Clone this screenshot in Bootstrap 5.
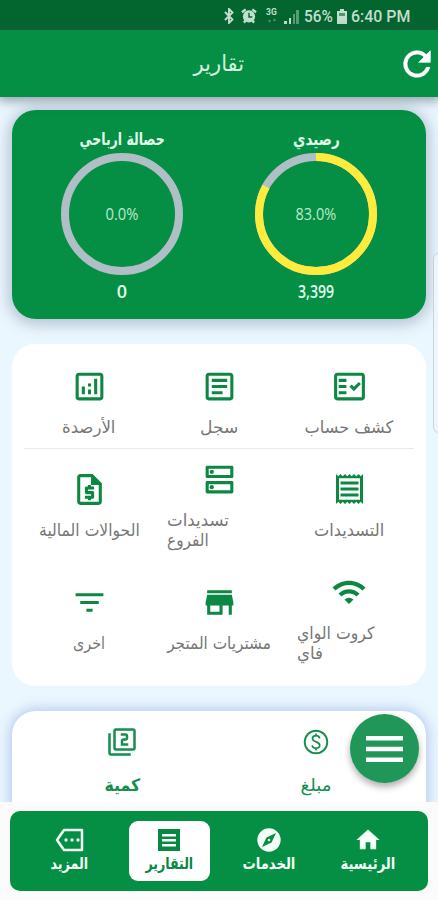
<!DOCTYPE html>
<html lang="ar">
<head>
<meta charset="utf-8">
<meta name="viewport" content="width=device-width, initial-scale=1">
<title>تقارير</title>
<link rel="stylesheet" href="https://cdn.jsdelivr.net/npm/bootstrap@5.3.0/dist/css/bootstrap.min.css">
<style>
:root{--brand:#048f45}
body{width:438px;height:900px;overflow:hidden;position:relative;background:#ebf7ff;font-family:"DejaVu Sans Condensed","DejaVu Sans",sans-serif;color:#777}
svg{display:block;fill:currentColor;flex:none}
.fit{display:inline-block;white-space:nowrap}
.num{font-family:"Open Sans","Noto Sans",sans-serif}
.status-strip{height:30px;background:#03662f;color:#c3dfcf;font:500 17px/30px Roboto,sans-serif;padding:2px 28px 0 0}
.status-strip .fit{transform-origin:right}
.bt{margin-right:6px}
.alarm{margin-right:9px}
.net{margin-right:6px}
.bars{margin-right:2px}
.batt{margin-left:4px}
.app-header{height:67px;background:var(--brand);color:#d5f0df;box-shadow:0 2px 10px 2px rgba(60,80,90,.5);position:relative}
.app-header h1{font-size:22px;line-height:30px;margin:0}
.reload{position:absolute;right:1px;top:14px;color:#fff}
.balance{height:209px;margin:13px 12px 0;border-radius:24px;background:var(--brand);color:#e3fbe9;padding:18px 13px 0;box-shadow:0 2px 14px 4px rgba(90,110,135,.36)}
.balance .cap{font-size:17px;line-height:22px;font-weight:700}
.gauge{width:122px;height:122px;margin:3px auto 0;position:relative}
.gauge .num{position:absolute;inset:0;line-height:122px;font-size:17px;color:#c0e9cd}
.gauge + .num{font-size:18px;line-height:22px;margin-top:5px;font-weight:600}
.reports{height:342px;margin:25px 12px 0;border-radius:23px;background:#fff;padding:15px 12px 0}
.reports .line1{height:90px;border-bottom:1px solid #e9e9e9}
.reports .line2{height:115px}
.reports .line3{height:111px}
.tile-icon{height:32px;margin-bottom:15px;color:#0d8843}
.tile-text{font-size:17px;line-height:20px}
.two{width:104px;text-align:left}
.two .fit{transform-origin:left}
.totals{height:120px;margin:25px 12px 0;border-radius:24px;background:#fff;padding:15px 13px 0;color:#168e50;box-shadow:0 0 12px 3px rgba(120,150,215,.42)}
.totals .lbl{font-size:17px;line-height:24px;margin-top:15px}
.dock{position:absolute;left:0;right:0;top:802px;height:98px;background:#fbfbfb;padding:9px 10px 0}
.dock nav{height:80px;border-radius:10px;background:var(--brand);padding:10px 10px;color:#f4fff7}
.dock .slot{width:81px;height:60px;border-radius:9px;padding-top:5px;margin:auto}
.dock .slot.active-slot{background:#fff;color:#078843}
.dock .lbl{font-size:16px;line-height:20px;font-weight:700}
.fab{position:absolute;left:350px;top:714px;width:69px;height:69px;border-radius:50%;background:#209658;color:#fff;box-shadow:0 4px 7px rgba(0,0,0,.32)}
.edge{position:absolute;left:433px;top:253px;width:12px;height:180px;border-radius:7px;background:#eef5fb;border:1px solid #c9d2dc}
</style>
</head>
<body>
<div class="status-strip d-flex justify-content-end align-items-center">
  <svg class="bt" width="12" height="16" viewBox="0 0 12 16"><path d="M2 4l7.500 7.500L6 15V1l3.500 3.500L2 12" fill="none" stroke="currentColor" stroke-width="1.900"/></svg>
  <svg class="alarm" width="16" height="16" viewBox="0 0 17 16"><circle cx="8.500" cy="8.500" r="6.500"/><path d="M1 4l4-3M16 4l-4-3M3 15l2-2M14 15l-2-2" stroke="currentColor" stroke-width="2.500"/><path d="M8.500 4.500v4.500h3.500" fill="none" stroke="#03662f" stroke-width="1.500"/></svg>
  <svg class="net" width="12" height="16" viewBox="0 0 12 16"><text x="0" y="7" font-size="8.500" font-weight="700">3G</text><path d="M2 12h3l-1.500 3zM7 13h3l-1.500-3z" opacity=".4"/></svg>
  <svg class="bars" width="15" height="15" viewBox="0 0 15 15"><path d="M0 12h3v3H0zM5 9h2v6H5z"/><path d="M9 5h2v10H9zM12 1h3v14h-3z" opacity=".45"/></svg>
  <span class="fit" data-w="29">56%</span>
  <svg class="batt" width="10" height="15" viewBox="0 0 10 15"><path d="M3 0h4v2h3v13H0V2h3z"/><path d="M2 4h6v3H2z" fill="#4e9870"/></svg>
  <span class="fit" data-w="59">6:40 PM</span>
</div>
<header class="app-header d-flex align-items-center justify-content-center">
  <h1><span class="fit" data-w="51">تقارير</span></h1>
  <svg class="reload" width="40" height="40" viewBox="0 0 24 24"><path stroke="currentColor" stroke-width=".4" d="M17.650 6.350A7.960 7.960 0 0 0 12 4a8 8 0 1 0 7.730 10h-2.080A6 6 0 1 1 12 6c1.660 0 3.140.690 4.220 1.780L13 11h7V4z"/></svg>
</header>

<section class="balance">
  <div class="row g-0 text-center" dir="rtl">
    <div class="col-6">
      <div class="cap"><span class="fit" data-w="47">رصيدي</span></div>
      <div class="gauge"><svg width="122" height="122"><g fill="none" stroke-width="8" transform="rotate(-90 61 61)"><circle cx="61" cy="61" r="57" stroke="#b0bec5"/><circle cx="61" cy="61" r="57" stroke="#ffeb3b" pathLength="100" stroke-dasharray="83 17"/></g></svg><div class="num"><span class="fit" data-w="41" dir="ltr">83.0%</span></div></div>
      <div class="num"><span class="fit" data-w="36">3,399</span></div>
    </div>
    <div class="col-6">
      <div class="cap"><span class="fit" data-w="85">حصالة ارباحي</span></div>
      <div class="gauge"><svg width="122" height="122"><circle cx="61" cy="61" r="57" fill="none" stroke="#b0bec5" stroke-width="8"/></svg><div class="num"><span class="fit" data-w="33" dir="ltr">0.0%</span></div></div>
      <div class="num"><span class="fit" data-w="10">0</span></div>
    </div>
  </div>
</section>

<section class="reports" dir="rtl">
  <div class="row g-0 line1 align-items-center">
    <div class="col-4 d-flex flex-column align-items-center"><div class="tile-icon d-flex align-items-center"><svg width="37" height="37" viewBox="0 0 24 24"><path fill-rule="evenodd" d="M20 3H4c-1.100 0-2 .9-2 2v14c0 1.100.9 2 2 2h16c1.100 0 2-.9 2-2V5c0-1.100-.9-2-2-2zm0 16H4V5h16z"/><path d="M19.410 10.420 18 9l-3.170 3.170-1.410-1.420L12 12.160 14.820 15zM5 7h5v2H5zm0 4h5v2H5zm0 4h5v2H5z"/></svg></div><div class="tile-text"><span class="fit" data-w="89">كشف حساب</span></div></div>
    <div class="col-4 d-flex flex-column align-items-center"><div class="tile-icon d-flex align-items-center"><svg width="37" height="37" viewBox="0 0 24 24"><path fill-rule="evenodd" d="M19 3H5c-1.100 0-2 .9-2 2v14c0 1.100.9 2 2 2h14c1.100 0 2-.9 2-2V5c0-1.100-.9-2-2-2zm0 16H5V5h14z"/><path d="M7 15h7v2H7zm0-4h10v2H7zm0-4h10v2H7z"/></svg></div><div class="tile-text"><span class="fit" data-w="38">سجل</span></div></div>
    <div class="col-4 d-flex flex-column align-items-center"><div class="tile-icon d-flex align-items-center"><svg width="37" height="37" viewBox="0 0 24 24"><path fill-rule="evenodd" d="M19 3H5c-1.100 0-2 .9-2 2v14c0 1.100.9 2 2 2h14c1.100 0 2-.9 2-2V5c0-1.100-.9-2-2-2zm0 16H5V5h14z"/><path d="M7 12h2v5H7zm8-5h2v10h-2zm-4 7h2v3h-2zm0-4h2v2h-2z"/></svg></div><div class="tile-text"><span class="fit" data-w="53">الأرصدة</span></div></div>
  </div>
  <div class="row g-0 line2 align-items-center">
    <div class="col-4 d-flex flex-column align-items-center"><div class="tile-icon d-flex align-items-center"><svg width="37" height="36" viewBox="0 0 24 24"><path fill-rule="evenodd" d="M19.500 3.500 18 2l-1.500 1.500L15 2l-1.500 1.500L12 2l-1.500 1.500L9 2 7.500 3.500 6 2 4.500 3.500 3 2v20l1.500-1.500L6 22l1.500-1.500L9 22l1.500-1.500L12 22l1.500-1.500L15 22l1.500-1.500L18 22l1.500-1.500L21 22V2zM19 19.090H5V4.910h14z"/><path d="M6 15h12v2H6zm0-4h12v2H6zm0-4h12v2H6z"/></svg></div><div class="tile-text"><span class="fit" data-w="70">التسديدات</span></div></div>
    <div class="col-4 d-flex flex-column align-items-center"><div class="tile-icon d-flex align-items-center"><svg width="37" height="37" viewBox="0 0 24 24"><path fill-rule="evenodd" d="M19 15v4H5v-4zm1-2H4c-.550 0-1 .450-1 1v6c0 .550.450 1 1 1h16c.550 0 1-.450 1-1v-6c0-.550-.450-1-1-1zM19 5v4H5V5zm1-2H4c-.550 0-1 .450-1 1v6c0 .550.450 1 1 1h16c.550 0 1-.450 1-1V4c0-.550-.450-1-1-1z"/><circle cx="7" cy="7" r="1.400"/><circle cx="7" cy="17" r="1.400"/></svg></div><div class="tile-text two"><span class="fit" data-w="62">تسديدات</span><br><span class="fit" data-w="42">الفروع</span></div></div>
    <div class="col-4 d-flex flex-column align-items-center"><div class="tile-icon d-flex align-items-center"><svg width="37" height="37" viewBox="0 0 24 24"><path fill-rule="evenodd" d="M14 2H6c-1.100 0-2 .9-2 2v16c0 1.100.890 2 1.990 2H18c1.100 0 2-.9 2-2V8zm4 18H6V4h7v5h5z"/><path d="M11 19h2v-1h1c.550 0 1-.450 1-1v-3c0-.550-.450-1-1-1h-3v-1h4v-2h-2V9h-2v1h-1c-.550 0-1 .450-1 1v3c0 .550.450 1 1 1h3v1H9v2h2z"/></svg></div><div class="tile-text"><span class="fit" data-w="101">الحوالات المالية</span></div></div>
  </div>
  <div class="row g-0 line3 align-items-center">
    <div class="col-4 d-flex flex-column align-items-center"><div class="tile-icon d-flex align-items-center"><svg width="36" height="36" viewBox="0 0 24 24"><path d="m1 9 2 2c4.970-4.970 13.030-4.970 18 0l2-2C16.930 2.930 7.080 2.930 1 9zm8 8 3 3 3-3a4.237 4.237 0 0 0-6 0zm-4-4 2 2a7.074 7.074 0 0 1 10 0l2-2C15.140 9.140 8.870 9.140 5 13z"/></svg></div><div class="tile-text two"><span class="fit" data-w="77">كروت الواي</span><br><span class="fit" data-w="26">فاي</span></div></div>
    <div class="col-4 d-flex flex-column align-items-center"><div class="tile-icon d-flex align-items-center"><svg width="37" height="37" viewBox="0 0 24 24"><path d="M20 4H4v2h16zm1 10v-2l-1-5H4l-1 5v2h1v6h10v-6h4v6h2v-6zm-9 4H6v-4h6z"/></svg></div><div class="tile-text"><span class="fit" data-w="104">مشتريات المتجر</span></div></div>
    <div class="col-4 d-flex flex-column align-items-center"><div class="tile-icon d-flex align-items-center"><svg width="37" height="37" viewBox="0 0 24 24"><path d="M10 18h4v-2h-4zM3 6v2h18V6zm3 7h12v-2H6z"/></svg></div><div class="tile-text"><span class="fit" data-w="32">اخرى</span></div></div>
  </div>
</section>

<section class="totals">
  <div class="row g-0 text-center" dir="rtl">
    <div class="col-6 d-flex flex-column align-items-center"><svg width="32" height="32" viewBox="0 0 32 32"><circle cx="16" cy="16" r="11.300" fill="none" stroke="currentColor" stroke-width="1.900"/><path d="M19.500 12.500c0-1.800-1.500-2.800-3.500-2.800s-3.500 1-3.500 2.800c0 4.300 7.200 2.400 7.200 6.800 0 1.900-1.600 2.900-3.700 2.900s-3.700-1-3.700-2.900M16 7.500v2.500M16 22v2.500" fill="none" stroke="currentColor" stroke-width="1.700"/></svg><div class="lbl"><span class="fit" data-w="31">مبلغ</span></div></div>
    <div class="col-6 d-flex flex-column align-items-center"><svg width="30" height="32" viewBox="0 0 24 24"><path fill-rule="evenodd" d="M3 5H1v16c0 1.100.9 2 2 2h16v-2H3zm18-4H7c-1.100 0-2 .9-2 2v14c0 1.100.9 2 2 2h14c1.100 0 2-.9 2-2V3c0-1.100-.9-2-2-2zm0 16H7V3h14z"/><path d="M17 13h-4v-2h2c1.100 0 2-.890 2-2V7c0-1.110-.9-2-2-2h-4v2h4v2h-2c-1.100 0-2 .890-2 2v4h6z"/></svg><div class="lbl fw-bold"><span class="fit" data-w="36">كمية</span></div></div>
  </div>
</section>

<div class="edge"></div>
<button class="fab border-0 p-0 d-flex align-items-center justify-content-center" aria-label="القائمة"><svg width="37" height="26" viewBox="0 0 37 26"><path d="M0 0h37v4.500H0zM0 10.700h37v4.500H0zM0 21.400h37v4.500H0z"/></svg></button>

<footer class="dock">
  <nav dir="rtl"><div class="row g-0 text-center">
    <div class="col-3"><div class="slot d-flex flex-column align-items-center"><svg width="28" height="28" viewBox="0 0 24 24"><path d="M10 20v-6h4v6h5v-8h3L12 3 2 12h3v8z"/></svg><div class="lbl"><span class="fit" data-w="55">الرئيسية</span></div></div></div>
    <div class="col-3"><div class="slot d-flex flex-column align-items-center"><svg width="30" height="28" viewBox="0 0 24 24"><path fill-rule="evenodd" d="M12 10.900a1.100 1.100 0 1 0 0 2.200 1.100 1.100 0 0 0 0-2.200zM12 2a10 10 0 1 0 0 20 10 10 0 0 0 0-20zm2.190 12.190L6 18l3.810-8.190L18 6z"/></svg><div class="lbl"><span class="fit" data-w="53">الخدمات</span></div></div></div>
    <div class="col-3"><div class="slot active-slot d-flex flex-column align-items-center"><svg width="28" height="28" viewBox="0 0 28 28"><path fill-rule="evenodd" d="M3 3h22v22H3zM7 8v2.500h14V8zm0 5v2.500h14V13zm0 5v2.500h14V18z"/></svg><div class="lbl"><span class="fit" data-w="48">التقارير</span></div></div></div>
    <div class="col-3"><div class="slot d-flex flex-column align-items-center"><svg width="32" height="28" viewBox="0 0 32 28"><path d="M10 4h18v20H10L3 14z" fill="none" stroke="currentColor" stroke-width="2.500" stroke-linejoin="round"/><circle cx="12" cy="14" r="1.700"/><circle cx="18" cy="14" r="1.700"/><circle cx="24" cy="14" r="1.700"/></svg><div class="lbl"><span class="fit" data-w="38">المزيد</span></div></div></div>
  </div></nav>
</footer>
<script src="https://cdn.jsdelivr.net/npm/bootstrap@5.3.0/dist/js/bootstrap.bundle.min.js"></script>
<script>
// Condense or widen each label to its design width.
document.querySelectorAll('.fit').forEach(function (el) {
  el.style.transform = 'scaleX(' + (el.dataset.w / el.offsetWidth).toFixed(3) + ')';
});
</script>
</body>
</html>
